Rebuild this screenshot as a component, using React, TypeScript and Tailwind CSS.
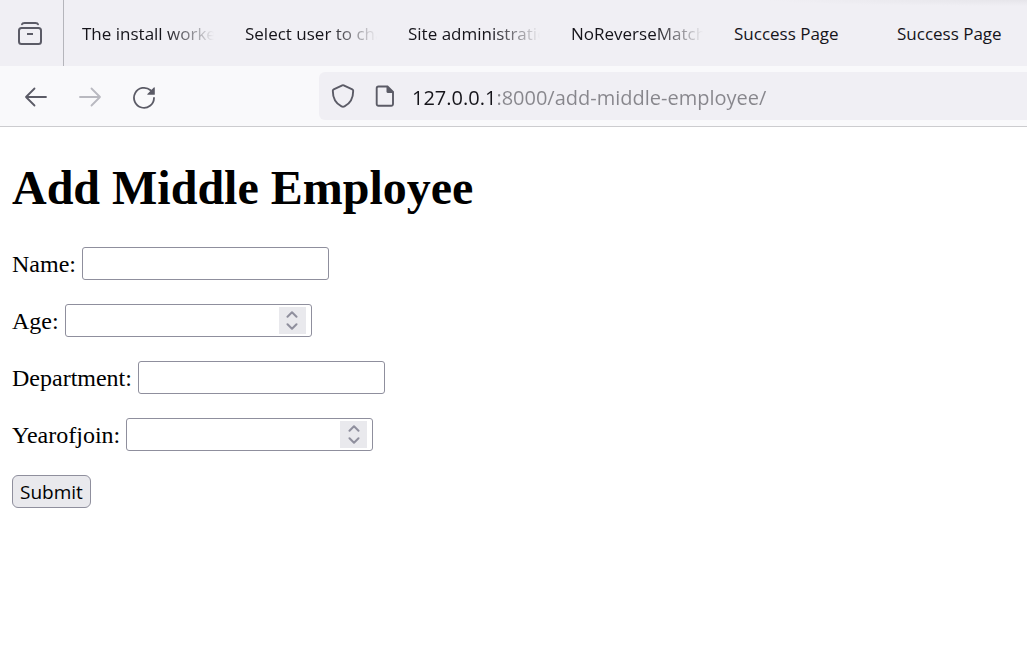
import { useState } from "react";

const tabs = [
  { title: "The install worked", fade: true },
  { title: "Select user to change", fade: true },
  { title: "Site administration", fade: true },
  { title: "NoReverseMatch", fade: true },
  { title: "Success Page", fade: false },
  { title: "Success Page", fade: false },
];

const fields = [
  { id: "name", label: "Name:", numeric: false },
  { id: "age", label: "Age:", numeric: true },
  { id: "department", label: "Department:", numeric: false },
  { id: "yearofjoin", label: "Yearofjoin:", numeric: true },
];

function ViewIcon() {
  return (
    <svg width="24" height="24" viewBox="0 0 24 24" fill="none" stroke="#5b5b66" strokeWidth="2" aria-hidden="true">
      <path d="M4 3.200C4.400 2 5.200 2 6.500 2h11c1.300 0 2.100 0 2.500 1.200" strokeLinecap="round" />
      <rect x="1" y="7" width="22" height="16" rx="2.500" />
      <path d="M9 13h6" />
    </svg>
  );
}

function ArrowIcon({ back }: { back?: boolean }) {
  return (
    <svg
      width="24"
      height="24"
      viewBox="0 0 24 24"
      fill="none"
      stroke={back ? "#5b5b66" : "#b9b9c0"}
      strokeWidth="1.800"
      strokeLinecap="round"
      strokeLinejoin="round"
      aria-hidden="true"
    >
      {back ? <path d="M22 12H2M10.500 3.500L2 12l8.500 8.500" /> : <path d="M2 12h20M13.500 3.500L22 12l-8.500 8.500" />}
    </svg>
  );
}

function ReloadIcon() {
  return (
    <svg width="24" height="24" viewBox="0 0 24 24" fill="none" aria-hidden="true">
      <path d="M22 13A10 10 0 1 1 18.600 5.300" stroke="#5b5b66" strokeWidth="1.800" strokeLinecap="round" />
      <path d="M22.800 2.800v6.400a.6.6 0 0 1-.6.6h-6.400c-.5 0-.7-.5-.4-.9l6.400-6.400c.4-.4 1-.2 1 .3z" fill="#5b5b66" />
    </svg>
  );
}

function ShieldIcon() {
  return (
    <svg width="24" height="24" viewBox="0 0 24 24" fill="none" aria-hidden="true">
      <path
        d="M11.300 1.300a1.600 1.600 0 0 1 1.400 0l8.600 4a1.600 1.600 0 0 1 .9 1.500c0 7-2.500 12.500-8.700 15.600a3.300 3.300 0 0 1-3 0C4.300 19.300 1.800 13.800 1.800 6.800a1.600 1.600 0 0 1 .9-1.500z"
        stroke="#5b5b66"
        strokeWidth="1.900"
      />
    </svg>
  );
}

function PageIcon() {
  return (
    <svg width="24" height="24" viewBox="0 0 24 24" fill="none" aria-hidden="true">
      <path d="M5.500 2.500h9L20 8v12a1.800 1.800 0 0 1-1.800 1.800H5.500a1.800 1.800 0 0 1-1.800-1.800V4.300a1.800 1.800 0 0 1 1.800-1.800z" stroke="#5b5b66" strokeWidth="1.900" />
      <path d="M13.500 2l7 7h-5.500a1.500 1.500 0 0 1-1.500-1.500z" fill="#5b5b66" />
    </svg>
  );
}

function NumberInput({ id }: { id: string }) {
  const [value, setValue] = useState("");
  const step = (delta: number) => setValue((v) => String(Number(v) + delta));
  return (
    <div className="flex h-[33px] w-[247px] items-center rounded-[3px] border border-[#8f8f9d] bg-white pr-[5px]">
      <input
        id={id}
        name={id}
        type="number"
        value={value}
        onChange={(e) => setValue(e.target.value)}
        className="h-full min-w-0 flex-1 appearance-none px-1 text-xl outline-none [-moz-appearance:textfield] [&::-webkit-inner-spin-button]:appearance-none"
      />
      <div className="flex h-[27px] w-[27px] flex-col items-center justify-center gap-[5px] bg-[#e9e9ed]">
        <button type="button" aria-label="Increase" onClick={() => step(1)}>
          <svg className="block" width="12" height="7" viewBox="0 0 12 7" fill="none" stroke="#8f8f9d" strokeWidth="2" strokeLinecap="round" strokeLinejoin="round">
            <path d="M1.500 5.700L6 1.200l4.500 4.500" />
          </svg>
        </button>
        <button type="button" aria-label="Decrease" onClick={() => step(-1)}>
          <svg className="block" width="12" height="7" viewBox="0 0 12 7" fill="none" stroke="#8f8f9d" strokeWidth="2" strokeLinecap="round" strokeLinejoin="round">
            <path d="M1.500 1.300L6 5.800l4.500-4.500" />
          </svg>
        </button>
      </div>
    </div>
  );
}

export default function App() {
  return (
    <div className="min-h-screen overflow-hidden bg-white font-['Open_Sans',sans-serif]">
      <header>
        <div className="flex h-[66px] bg-[#f0eff4] bg-[radial-gradient(ellipse_260px_6px_at_100%_0,#e6e5ea,transparent)]">
          <button type="button" aria-label="View recent browsing" className="flex w-16 shrink-0 items-center justify-center border-r border-[#b5b5bb] pr-1">
            <ViewIcon />
          </button>
          <nav aria-label="Tabs" className="flex min-w-0 flex-1 items-center overflow-hidden pt-[2px] pl-[18px]">
            {tabs.map((tab, i) => (
              <a key={i} href="#" className="w-[163px] shrink-0 pr-[31px] text-[17px] leading-6 text-[#15141a]">
                <span
                  className={
                    tab.fade
                      ? "block overflow-hidden whitespace-nowrap mask-[linear-gradient(to_left,transparent,black_48px)]"
                      : "block overflow-hidden whitespace-nowrap"
                  }
                >
                  {tab.title}
                </span>
              </a>
            ))}
          </nav>
        </div>
        <div className="flex h-[61px] items-center border-b border-[#cccccf] bg-[#f9f9fb] pl-6">
          <div className="flex w-[295px] shrink-0 items-center gap-[30px] pt-[2px]">
            <button type="button" aria-label="Back">
              <ArrowIcon back />
            </button>
            <button type="button" aria-label="Forward">
              <ArrowIcon />
            </button>
            <button type="button" aria-label="Reload">
              <ReloadIcon />
            </button>
          </div>
          <div className="flex h-12 min-w-0 flex-1 items-center rounded-l-md bg-[#f0eff4] pl-3">
            <ShieldIcon />
            <span className="ml-[18px]">
              <PageIcon />
            </span>
            <input
              type="text"
              aria-label="Address"
              defaultValue="127.0.0.1:8000/add-middle-employee/"
              className="ml-[15px] h-full min-w-0 flex-1 bg-[linear-gradient(to_right,#15141a_84px,#87868c_84px)] bg-clip-text pt-[2px] text-[20px] text-transparent caret-[#15141a] outline-none"
            />
          </div>
        </div>
      </header>
      <main className="px-3 py-8 font-['Liberation_Serif',serif] text-black">
        <h1 className="mb-[30px] text-5xl leading-[58px] font-bold">Add Middle Employee</h1>
        <form className="flex flex-col items-start gap-6" onSubmit={(e) => e.preventDefault()}>
          {fields.map((field) => (
            <div key={field.id} className="flex h-[33px] items-center gap-[6px]">
              <label htmlFor={field.id} className="text-2xl">
                {field.label}
              </label>
              {field.numeric ? (
                <NumberInput id={field.id} />
              ) : (
                <input
                  id={field.id}
                  name={field.id}
                  type="text"
                  className="h-[33px] w-[247px] rounded-[3px] border border-[#8f8f9d] bg-white px-1 text-xl outline-none"
                />
              )}
            </div>
          ))}
          <button
            type="submit"
            className="flex h-[33px] items-center rounded-md border border-[#8f8f9d] bg-[#e9e9ed] px-[7px] pt-[2px] font-['Open_Sans',sans-serif] text-[19px] text-black"
          >
            Submit
          </button>
        </form>
      </main>
    </div>
  );
}
